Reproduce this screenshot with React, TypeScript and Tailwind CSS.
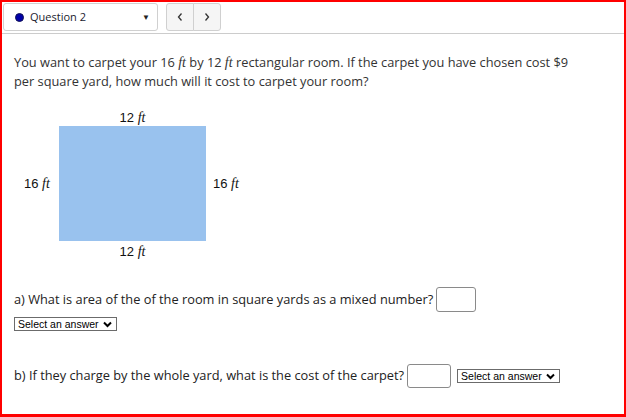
import React from "react";

const Ft = () => (
  <span className="text-[14px] italic" style={{ fontFamily: '"Liberation Serif", serif' }}>ft</span>
);

const SelectBox = () => (
  <div className="inline-flex h-[14px] w-[103px] items-center justify-between whitespace-nowrap border border-[#6b6b6b] bg-white pl-[3px] pr-[4px] text-[10.5px] leading-none text-black" style={{ fontFamily: '"Liberation Sans", Arial, sans-serif' }}>
    <span className="whitespace-nowrap">Select an answer</span>
    <svg width="9" height="7" viewBox="0 0 9 7" className="ml-[2px] shrink-0">
      <path d="M1 1.5 L4.5 5 L8 1.5" fill="none" stroke="#000" strokeWidth="2" />
    </svg>
  </div>
);

export default function App() {
  return (
    <div
      className="flex h-[417px] w-[626px] flex-col border-2 border-b-[3px] border-[#ff0000] bg-white text-[#222]"
      style={{ fontFamily: '"Open Sans", sans-serif' }}
    >
      {/* header */}
      <div className="flex h-[32px] items-start border-b border-[#cccccc] pl-[1px] pt-[1px]">
        <div className="flex h-[28px] w-[155px] items-center rounded-[3px] border border-[#d0d0d0] bg-white pl-[11px] pr-[7px]">
          <span className="h-[9px] w-[9px] rounded-full border border-[#111155] bg-[#0000a8]" />
          <span className="ml-[6px] text-[11px] text-[#1a1a2e]">Question 2</span>
          <span className="ml-auto text-[8px] text-[#222]">▼</span>
        </div>
        <div className="ml-[8px] flex h-[28px]">
          <button className="flex h-[28px] w-[28px] items-center justify-center rounded-l-[3px] border border-[#d0d0d0] bg-[#f5f5f5]">
            <svg width="8" height="10" viewBox="0 0 8 10">
              <path d="M5.5 1.5 L2.5 5 L5.5 8.5" fill="none" stroke="#333" strokeWidth="1.3" />
            </svg>
          </button>
          <button className="-ml-px flex h-[28px] w-[28px] items-center justify-center rounded-r-[3px] border border-[#d0d0d0] bg-[#f5f5f5]">
            <svg width="8" height="10" viewBox="0 0 8 10">
              <path d="M2.5 1.5 L5.5 5 L2.5 8.5" fill="none" stroke="#333" strokeWidth="1.3" />
            </svg>
          </button>
        </div>
      </div>

      {/* content */}
      <div className="flex flex-col px-[12px] pt-[19px]">
        <p className="text-[12.8px] leading-[18px] text-[#333]">
          You want to carpet your 16 <Ft /> by 12 <Ft /> rectangular room. If the carpet you have chosen cost $9
          <br />
          per square yard, how much will it cost to carpet your room?
        </p>

        {/* diagram */}
        <div
          className="ml-[10px] mt-[18px] grid grid-cols-[35px_147px_auto] grid-rows-[18px_115px_20px] text-[13px] text-[#111]"
          style={{ fontFamily: '"Liberation Sans", Arial, sans-serif' }}
        >
          <div />
          <div className="flex items-center justify-center">
            <span>12 <Ft /></span>
          </div>
          <div />
          <div className="flex items-center">
            <span>16 <Ft /></span>
          </div>
          <div className="bg-[#99c2ee]" />
          <div className="flex items-center pl-[7px]">
            <span>16 <Ft /></span>
          </div>
          <div />
          <div className="flex items-center justify-center">
            <span>12 <Ft /></span>
          </div>
          <div />
        </div>

        {/* a) */}
        <div className="mt-[26px] flex items-center">
          <span className="text-[12.8px] text-[#222]">a) What is area of the of the room in square yards as a mixed number?</span>
          <input className="ml-[3px] h-[25px] w-[40px] rounded-[3px] border border-[#8a8a8a] bg-white" />
        </div>
        <div className="mt-[5px] flex">
          <SelectBox />
        </div>

        {/* b) */}
        <div className="mt-[33px] flex items-center">
          <span className="text-[12.8px] text-[#222]">b) If they charge by the whole yard, what is the cost of the carpet?</span>
          <input className="ml-[3px] h-[24px] w-[44px] rounded-[3px] border border-[#8a8a8a] bg-white" />
          <div className="ml-[6px] flex">
            <SelectBox />
          </div>
        </div>
      </div>
    </div>
  );
}
